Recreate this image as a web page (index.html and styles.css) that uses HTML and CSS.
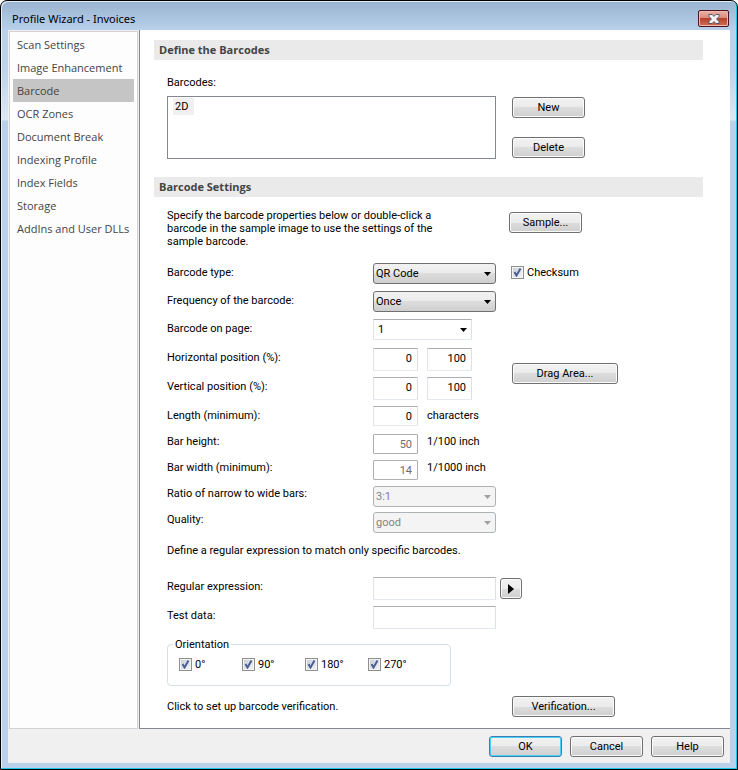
FILE: index.html
```html
<!DOCTYPE html>
<html lang="en">
<head>
    <meta charset="UTF-8">
    <meta name="viewport" content="width=device-width, initial-scale=1.0">
    <title>Profile Wizard - Invoices</title>
    <link rel="stylesheet" href="styles.css">
</head>
<body>
    <div class="window">
        <header class="titlebar">
            <h1>Profile Wizard - Invoices</h1>
            <button class="close" type="button" aria-label="Close">
                <svg width="12" height="10" viewBox="0 0 12 10">
                    <path d="M1 .5h3.2L6 2.4 7.8.5H11v2L8.6 5 11 7.5v2H7.8L6 7.6 4.2 9.500H1v-2L3.400 5 1 2.500z" fill="#f4f4f6" stroke="#53586b"/>
                </svg>
            </button>
        </header>

        <form class="client">
            <div class="main">
                <nav class="sidebar">
                    <a href="#">Scan Settings</a>
                    <a href="#">Image Enhancement</a>
                    <a href="#" class="active">Barcode</a>
                    <a href="#">OCR Zones</a>
                    <a href="#">Document Break</a>
                    <a href="#">Indexing Profile</a>
                    <a href="#">Index Fields</a>
                    <a href="#">Storage</a>
                    <a href="#">AddIns and User DLLs</a>
                </nav>

                <div class="content">
                    <h2>Define the Barcodes</h2>
                    <section class="define">
                        <div class="list-label" id="barcodesLabel">Barcodes:</div>
                        <div class="columns">
                            <ul class="listbox" role="listbox" aria-labelledby="barcodesLabel">
                                <li role="option" aria-selected="true">2D</li>
                            </ul>
                            <div class="stack">
                                <button type="button">New</button>
                                <button type="button">Delete</button>
                            </div>
                        </div>
                    </section>

                    <h2>Barcode Settings</h2>
                    <section class="settings">
                        <div class="intro">
                            <p>Specify the barcode properties below or double-click a barcode in the sample image to use the settings of the sample barcode.</p>
                            <button type="button">Sample...</button>
                        </div>

                        <div class="row">
                            <label for="type">Barcode type:</label>
                            <select id="type" class="combo"><option>QR Code</option></select>
                            <label class="check checksum"><input type="checkbox" checked>Checksum</label>
                        </div>
                        <div class="row">
                            <label for="frequency">Frequency of the barcode:</label>
                            <select id="frequency" class="combo"><option>Once</option></select>
                        </div>
                        <div class="row tall">
                            <label for="page">Barcode on page:</label>
                            <select id="page" class="combo plain"><option>1</option></select>
                        </div>
                        <div class="area">
                            <div>
                                <div class="row tall">
                                    <label for="left">Horizontal position (%):</label>
                                    <input id="left" class="number" type="text" value="0">
                                    <input class="number" type="text" value="100" aria-label="Horizontal position to">
                                </div>
                                <div class="row tall">
                                    <label for="top">Vertical position (%):</label>
                                    <input id="top" class="number" type="text" value="0">
                                    <input class="number" type="text" value="100" aria-label="Vertical position to">
                                </div>
                            </div>
                            <button class="wide" type="button">Drag Area...</button>
                        </div>
                        <div class="row">
                            <label for="length">Length (minimum):</label>
                            <input id="length" class="number short" type="text" value="0">
                            <span>characters</span>
                        </div>
                        <div class="row compact">
                            <label for="height">Bar height:</label>
                            <input id="height" class="number short" type="text" value="50" disabled>
                            <span>1/100 inch</span>
                        </div>
                        <div class="row compact">
                            <label for="width">Bar width (minimum):</label>
                            <input id="width" class="number short" type="text" value="14" disabled>
                            <span>1/1000 inch</span>
                        </div>
                        <div class="row compact">
                            <label for="ratio">Ratio of narrow to wide bars:</label>
                            <select id="ratio" class="combo" disabled><option>3:1</option></select>
                        </div>
                        <div class="row compact">
                            <label for="quality">Quality:</label>
                            <select id="quality" class="combo" disabled><option>good</option></select>
                        </div>

                        <p class="hint">Define a regular expression to match only specific barcodes.</p>

                        <div class="row tall">
                            <label for="regex">Regular expression:</label>
                            <input id="regex" class="text" type="text">
                            <button class="play" type="button" aria-label="Insert expression">
                                <svg width="6" height="10" viewBox="0 0 6 10"><path d="M0 0l6 5-6 5z"/></svg>
                            </button>
                        </div>
                        <div class="row tall">
                            <label for="testdata">Test data:</label>
                            <input id="testdata" class="text" type="text">
                        </div>

                        <fieldset>
                            <legend>Orientation</legend>
                            <label class="check"><input type="checkbox" checked>0°</label>
                            <label class="check"><input type="checkbox" checked>90°</label>
                            <label class="check"><input type="checkbox" checked>180°</label>
                            <label class="check"><input type="checkbox" checked>270°</label>
                        </fieldset>

                        <div class="verify">
                            <span>Click to set up barcode verification.</span>
                            <button class="verification" type="button">Verification...</button>
                        </div>
                    </section>
                </div>
            </div>

            <footer>
                <button class="default" type="button">OK</button>
                <button type="button">Cancel</button>
                <button type="button">Help</button>
            </footer>
        </form>
    </div>
</body>
</html>
```
FILE: styles.css
```css
* { box-sizing: border-box; }
body { margin: 0; font: 11px/13px Roboto, "Liberation Sans", sans-serif; color: #000; }
h1, h2, p, ul { margin: 0; padding: 0; font-size: 11px; font-weight: normal; }
button, input, select { font: inherit; color: inherit; margin: 0; }

/* window frame */
.window {
    display: flex;
    flex-direction: column;
    min-height: 100vh;
    padding: 0 7px 6px 6px;
    border: 1px solid #000;
    border-radius: 7px 7px 0 0;
    background: linear-gradient(#99b4d1, #b9d1ea 30px, #bdd4ec 70px, #dbe8f6 119px, #b9d1ea 120px);
    box-shadow: inset -1px -1px #22c5e8, inset 1px 1px #e4eef8;
}
.titlebar { display: flex; justify-content: space-between; height: 29px; padding: 9px 1px 0 5px; }
.titlebar h1 { font-family: "Noto Sans", sans-serif; line-height: 18px; }
.close {
    display: flex;
    align-items: center;
    justify-content: center;
    width: 31px;
    min-width: 0;
    height: 17px;
    padding: 0;
    border: 1px solid #4a1420;
    border-radius: 2px;
    background: linear-gradient(#eab0a5, #d98a7c 48%, #b8402a 50%, #cf7058);
    box-shadow: inset 0 0 0 1px #f0b9b0;
}
.client { display: flex; flex-direction: column; flex: 1; margin: 0 0 0 1px; background: #f0f0f0; }
.main { display: flex; flex: 1; }

/* page list */
.sidebar { width: 129px; margin: 1px 1px 0; padding: 1px 3px; border: 1px solid #d2d2d2; background: #fdfdfd; font-family: "Open Sans", sans-serif; }
.sidebar a { display: block; padding-left: 4px; line-height: 23px; color: #444; text-decoration: none; white-space: nowrap; }
.sidebar .active { background: #c5c5c5; }

.content { flex: 1; padding: 10px 27px 10px 14px; border-left: 1px solid #828790; border-bottom: 1px solid #828790; background: #fff; }
h2 { padding-left: 5px; font-family: "Open Sans", sans-serif; line-height: 20px; font-weight: bold; color: #444; background: #eaeaea; }
section { padding-left: 13px; }

button {
    width: 73px;
    height: 21px;
    padding: 0;
    border: 1px solid #707070;
    border-radius: 3px;
    background: linear-gradient(#f2f2f2, #ebebeb 50%, #dddddd 50%, #cfcfcf);
    box-shadow: inset 0 0 0 1px #fbfbfb;
}
button.default { border-color: #3c7fb1; box-shadow: inset 0 0 0 1px #47d0f8; }

.define { padding-top: 16px; padding-bottom: 18px; }
.list-label { margin-bottom: 7px; }
.columns { display: flex; gap: 16px; }
.listbox { width: 329px; height: 63px; padding: 1px 5px; border: 1px solid #828790; list-style: none; }
.listbox li { width: 21px; padding-left: 2px; line-height: 17px; background: #f0f0f0; }
.stack { display: flex; flex-direction: column; gap: 19px; padding-top: 1px; }

.intro { display: flex; justify-content: flex-start; gap: 72px; height: 66px; padding-top: 12px; }
.intro p { width: 270px; }
.intro button { margin-top: 3px; }

/* form rows */
.row { display: flex; height: 28px; }
.row.tall { height: 29px; }
.row.compact { height: 26px; }
.row > label:first-child { width: 206px; }
.row > label, .row > span { line-height: 20px; }
.row.compact > label, .row.compact > span { line-height: 16px; }

.combo {
    width: 123px;
    height: 21px;
    padding: 0 2px;
    appearance: none;
    border: 1px solid #707070;
    border-radius: 3px;
    background: url("data:image/svg+xml,%3Csvg xmlns='http://www.w3.org/2000/svg' width='7' height='4'%3E%3Cpath d='M0 0h7L3.500 4z'/%3E%3C/svg%3E") no-repeat right 4px center,
        linear-gradient(#f2f2f2, #ebebeb 50%, #dddddd 50%, #cfcfcf);
}
.combo:disabled {
    border-color: #adb2b5;
    color: #838383;
    opacity: 1;
    background: #f4f4f4 url("data:image/svg+xml,%3Csvg xmlns='http://www.w3.org/2000/svg' width='7' height='4'%3E%3Cpath d='M0 0h7L3.500 4z' fill='%23a0a0a0'/%3E%3C/svg%3E") no-repeat right 4px center;
}
.combo.plain {
    width: 99px;
    padding-left: 4px;
    border-color: #abadb3 #dbdfe6 #e3e9ef #e2e3ea;
    border-radius: 1px;
    background: #fff url("data:image/svg+xml,%3Csvg xmlns='http://www.w3.org/2000/svg' width='7' height='4'%3E%3Cpath d='M0 0h7L3.500 4z'/%3E%3C/svg%3E") no-repeat right 4px center;
}
.number, .text {
    height: 23px;
    padding: 0 5px 2px;
    border: 1px solid;
    border-color: #abadb3 #dbdfe6 #e3e9ef #e2e3ea;
    border-radius: 1px;
    background: #fff;
}
.number { width: 45px; margin-right: 9px; text-align: right; }
.number.short { height: 20px; padding-bottom: 0; }
.number:disabled { border-color: #afafaf; color: #6d6d6d; }
.text { width: 123px; }

.check { display: flex; align-items: center; gap: 3px; }
.check input {
    width: 13px;
    height: 13px;
    appearance: none;
    border: 1px solid #8e8f8f;
    background: linear-gradient(135deg, #c8cdd4, #f4f5f6);
    box-shadow: inset 0 0 0 1px #f4f4f4;
}
.check input:checked {
    background: url("data:image/svg+xml,%3Csvg xmlns='http://www.w3.org/2000/svg' width='11' height='11'%3E%3Cpath d='M2.500 5l2 3.500L8.500 1.500' fill='none' stroke='%234a5f97' stroke-width='2'/%3E%3C/svg%3E") no-repeat center,
        linear-gradient(135deg, #c8cdd4, #f4f5f6);
}
.checksum { height: 19px; margin-left: 15px; }

.area { display: flex; gap: 31px; }
.area button { margin-top: 15px; }
button.wide { width: 106px; }
button.verification { width: 103px; }
.hint { height: 39px; padding-top: 6px; }
.play { display: flex; align-items: center; justify-content: center; width: 22px; margin: 1px 0 0 4px; }

fieldset { display: grid; grid-template-columns: repeat(4, 63px); width: 284px; height: 48px; margin: 3px 0 10px; padding: 6px 11px 14px; border: 1px solid #d5dfe5; border-radius: 4px; }
legend { margin-left: -6px; padding: 0 2px; }
.verify { display: flex; align-items: center; justify-content: space-between; width: 448px; }

footer { display: flex; justify-content: flex-end; gap: 8px; padding: 7px 6px 6px; }
```
